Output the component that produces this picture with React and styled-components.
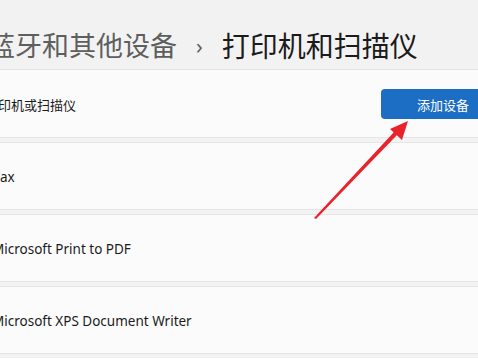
import React from "react";
import styled, { createGlobalStyle } from "styled-components";

const Global = createGlobalStyle`
  html, body { margin: 0; padding: 0; background: #f3f3f3; overflow: hidden; }
  body { font-family: "Segoe UI", "Noto Sans", "Noto Sans CJK SC", sans-serif; }
`;

const Page = styled.div`
  position: relative;
  width: 478px;
  height: 358px;
  overflow: hidden;
  background: #f3f3f3;
`;

const Header = styled.header`
  height: 70px;
  border-bottom: 1px solid #e3e3e3;
  background: #f2f2f2;
  display: flex;
  align-items: flex-start;
  padding-top: 31px;
  box-sizing: border-box;
  margin-left: -12px;
`;

const Crumb = styled.span`
  font-family: "Noto Sans CJK SC", sans-serif;
  font-size: ${(p) => p.$size}px;
  line-height: 28px;
  color: ${(p) => (p.$current ? "#1b1b1b" : "#5e5e5e")};
  white-space: nowrap;
`;

const Chevron = styled.span`
  font-family: "Noto Sans", sans-serif;
  font-size: 22px;
  line-height: 28px;
  color: #5e5e5e;
  margin: 0 19px 0 19px;
`;

const List = styled.div`
  display: flex;
  flex-direction: column;
  gap: 4px;
  margin-left: -60px;
  width: calc(100% + 120px);
`;

const Card = styled.div`
  height: 68px;
  box-sizing: border-box;
  background: #fbfbfb;
  border: 1px solid #e5e5e5;
  border-top-color: ${(p) => (p.$first ? "transparent" : "#e5e5e5")};
  display: flex;
  align-items: center;
  justify-content: space-between;
  padding-left: ${(p) => p.$indent}px;
  padding-top: ${(p) => (p.$first ? 0 : 2)}px;
`;

const Label = styled.span`
  font-family: "Segoe UI", "Noto Sans", "Noto Sans CJK SC", sans-serif;
  font-size: 13.5px;
  color: #1b1b1b;
  white-space: nowrap;
`;

const CjkLabel = styled(Label)`
  font-family: "Noto Sans CJK SC", sans-serif;
  font-size: 13px;
`;

const Button = styled.button`
  width: 124px;
  height: 30px;
  margin-right: 32px;
  margin-top: 0px;
  border: none;
  border-radius: 4px;
  background: #1b6ec3;
  color: #ffffff;
  font-family: "Noto Sans CJK SC", sans-serif;
  font-size: 13px;
  padding: 0;
`;

const Arrow = styled.svg`
  position: absolute;
  left: 0;
  top: 0;
  pointer-events: none;
`;

export default function App() {
  return (
    <Page>
      <Global />
      <Header>
        <Crumb $size={27}>蓝牙和其他设备</Crumb>
        <Chevron>›</Chevron>
        <Crumb $size={28} $current>打印机和扫描仪</Crumb>
      </Header>
      <List>
        <Card $first $indent={18}>
          <CjkLabel>添加打印机或扫描仪</CjkLabel>
          <Button>添加设备</Button>
        </Card>
        <Card $indent={52}>
          <Label>Fax</Label>
        </Card>
        <Card $indent={51}>
          <Label>Microsoft Print to PDF</Label>
        </Card>
        <Card $indent={51}>
          <Label>Microsoft XPS Document Writer</Label>
        </Card>
      </List>
      <Arrow width="478" height="358" viewBox="0 0 478 358">
        <polygon points="314,218 316,219 398,134 395,131" fill="#e8232b" />
        <polygon points="408,121 390,129 402,140" fill="#e8232b" />
      </Arrow>
    </Page>
  );
}
